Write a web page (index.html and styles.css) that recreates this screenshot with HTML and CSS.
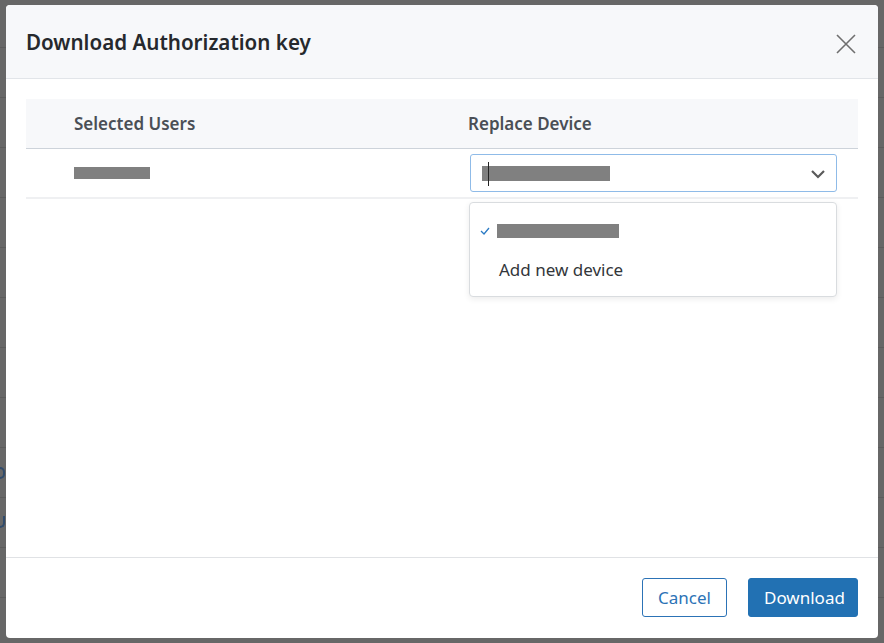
FILE: index.html
```html
<!DOCTYPE html>
<html>
<head>
<meta charset="utf-8">
<link rel="stylesheet" href="styles.css">
</head>
<body>
<div class="page">
  <span class="frag frag-a"></span>
  <span class="frag frag-b"></span>
</div>
<div class="modal">
  <div class="modal-header">
    <h1 class="modal-title">Download Authorization key</h1>
    <button class="close-btn" aria-label="Close">
      <svg width="20" height="20" viewBox="0 0 20 20"><path d="M1 1L19 19M19 1L1 19" stroke="#6f6f6f" stroke-width="1.6" fill="none"/></svg>
    </button>
  </div>
  <div class="modal-body">
    <div class="table">
      <div class="row head">
        <div class="cell first">Selected Users</div>
        <div class="cell">Replace Device</div>
      </div>
      <div class="row">
        <div class="cell first"><span class="redact redact-user"></span></div>
        <div class="cell">
          <div class="select">
            <span class="caret"></span>
            <span class="redact redact-sel"></span>
            <svg class="chevron" width="16" height="10" viewBox="0 0 16 10"><path d="M2 2L8 8L14 2" stroke="#5a5a5a" stroke-width="2.2" fill="none"/></svg>
          </div>
        </div>
      </div>
    </div>
    <div class="dropdown">
      <div class="option first-opt">
        <svg class="check" width="10" height="8" viewBox="0 0 10 8"><path d="M1 4L4 7L9 1" stroke="#2a7ac4" stroke-width="1.3" fill="none"/></svg>
        <span class="redact redact-opt"></span>
      </div>
      <div class="option">Add new device</div>
    </div>
  </div>
  <div class="modal-footer">
    <button class="btn btn-secondary">Cancel</button>
    <button class="btn btn-primary">Download</button>
  </div>
</div>
</body>
</html>
```
FILE: styles.css
```css
html, body {
  margin: 0;
  padding: 0;
}
body {
  width: 884px;
  height: 643px;
  overflow: hidden;
  background: #676767;
  font-family: "Noto Sans", "Open Sans", sans-serif;
  position: relative;
}
.page {
  position: absolute;
  inset: 0;
  background:
    repeating-linear-gradient(to bottom, transparent 0, transparent 46px, #5c5c5c 46px, #5c5c5c 47px, transparent 47px, transparent 50px);
  background-position: 0 1px;
}
.frag {
  position: absolute;
  left: 0;
  width: 5px;
  height: 12px;
  border: 2px solid #23456e;
  border-left: 0;
  box-sizing: border-box;
  border-radius: 0 5px 5px 0;
  opacity: 0.8;
}
.frag-a { top: 467px; }
.frag-b { top: 516px; border-top: 0; border-radius: 0 0 5px 0; }
.modal {
  position: absolute;
  left: 6px;
  top: 5px;
  width: 872px;
  height: 633px;
  background: #fff;
  border-radius: 4px;
  display: flex;
  flex-direction: column;
  overflow: hidden;
}
.modal-header {
  background: #f7f8fa;
  border-bottom: 1px solid #e2e5e9;
  display: flex;
  align-items: center;
  justify-content: space-between;
  padding: 0 22px 0 20px;
  flex-shrink: 0;
  box-sizing: border-box;
  height: 74px;
}
.modal-title {
  margin: 0;
  font-size: 20.6px;
  font-weight: 600;
  color: #26292d;
  letter-spacing: 0;
}
.close-btn {
  border: 0;
  background: transparent;
  padding: 0;
  width: 20px;
  height: 20px;
  display: flex;
  margin-top: 4px;
}
.modal-body {
  flex: 1;
  padding: 20px 20px 0 20px;
  position: relative;
}
.table {
  width: 832px;
}
.row {
  display: grid;
  grid-template-columns: 442px 1fr;
  height: 48px;
  align-items: center;
  border-bottom: 2px solid #eff0f2;
}
.row.head {
  background: #f7f8fa;
  height: 49px;
  border-bottom: 1px solid #cdd3da;
  font-size: 17px;
  font-weight: 600;
  color: #4a4f56;
}
.cell.first {
  padding-left: 48px;
}
.redact {
  display: inline-block;
  background: #808080;
}
.redact-user {
  width: 76px;
  height: 12px;
  margin-top: 5px;
}
.select {
  margin-left: 2px;
  width: 367px;
  height: 38px;
  box-sizing: border-box;
  border: 1px solid #8fbbe8;
  border-radius: 3px;
  display: flex;
  align-items: center;
  padding-left: 11px;
  position: relative;
}
.caret {
  position: absolute;
  left: 17px;
  top: 7px;
  width: 1px;
  height: 24px;
  background: #222;
}
.redact-sel {
  width: 128px;
  height: 15px;
  margin-top: 1px;
}
.chevron {
  position: absolute;
  right: 10px;
  top: 14px;
}
.dropdown {
  position: absolute;
  left: 463px;
  top: 123px;
  width: 368px;
  height: 95px;
  box-sizing: border-box;
  background: #fff;
  border: 1px solid #d9dcdf;
  border-radius: 4px;
  box-shadow: 0 2px 6px rgba(0,0,0,0.08);
  padding-top: 8px;
}
.option {
  height: 38px;
  display: flex;
  align-items: center;
  padding-left: 29px;
  font-size: 17px;
  color: #33363a;
  position: relative;
}
.option.first-opt {
  height: 39px;
}
.check {
  position: absolute;
  left: 10px;
  top: 16px;
}
.redact-opt {
  width: 122px;
  height: 14px;
  margin-left: -2px;
}
.modal-footer {
  height: 80px;
  border-top: 1px solid #e0e2e5;
  display: flex;
  align-items: center;
  justify-content: flex-end;
  gap: 21px;
  padding: 0 20px;
  flex-shrink: 0;
}
.btn {
  height: 39px;
  box-sizing: border-box;
  border-radius: 3px;
  font-family: inherit;
  font-size: 17px;
  padding: 0 15px;
  margin-top: -1px;
}
.btn-secondary {
  width: 85px;
  background: #fff;
  border: 1px solid #2c73b6;
  color: #2c73b6;
}
.btn-primary {
  width: 110px;
  background: #2271b3;
  border: 1px solid #2271b3;
  color: #fff;
}
```
